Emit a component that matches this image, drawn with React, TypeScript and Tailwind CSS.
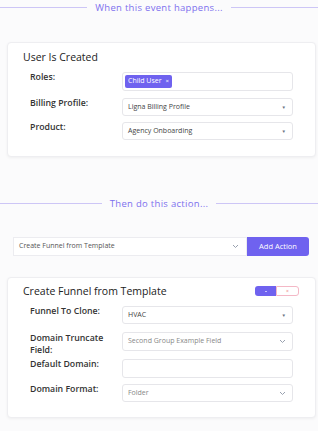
import React from 'react';

const font = { fontFamily: '"Open Sans", "Liberation Sans", sans-serif' };

function Divider({ text }: { text: string }) {
  return (
    <div className="flex items-center gap-[8px] h-[13px]">
      <div className="flex-1 h-px bg-[#cdc6f6]" />
      <span className="text-[9.5px] leading-[13px] tracking-[0.3px] text-[#7d70ee]">{text}</span>
      <div className="flex-1 h-px bg-[#cdc6f6]" />
    </div>
  );
}

function Caret() {
  return <span className="text-[4.5px] text-gray-500">▼</span>;
}

function Chevron() {
  return (
    <svg width="7" height="5" viewBox="0 0 7 5" className="text-gray-400">
      <path d="M1 1l2.5 2.5L6 1" fill="none" stroke="currentColor" strokeWidth="1" />
    </svg>
  );
}

function Field({ label, children, tall }: { label: React.ReactNode; children: React.ReactNode; tall?: boolean }) {
  return (
    <div className="flex items-start">
      <div className={`w-[99px] pl-[7px] text-[8.75px] font-semibold text-[#333] ${tall ? 'leading-[12px] -mb-[5px]' : 'leading-[11px]'}`}>
        {label}
      </div>
      <div className="flex-1">{children}</div>
    </div>
  );
}

function Select({ value, chevron, h = 'h-[18px]', muted }: { value: string; chevron?: boolean; h?: string; muted?: boolean }) {
  return (
    <div className={`${h} flex items-center justify-between border border-[#e6e6ea] rounded-[3px] bg-white pl-[5px] pr-[6px]`}>
      <span className={`text-[7px] ${muted ? 'text-[#888]' : 'text-[#444]'}`}>{value}</span>
      {chevron ? <Chevron /> : <Caret />}
    </div>
  );
}

export default function App() {
  return (
    <div className="w-[318px] h-[431px] bg-[#fbfbfc] overflow-hidden" style={font}>
      <div className="pt-[1px]">
        <Divider text="When this event happens..." />
      </div>

      <div className="mt-[28px] ml-[7px] mr-[2px] bg-white border border-[#eeeef1] rounded-[4px] shadow-[0_1px_3px_rgba(0,0,0,0.05)] pl-[15px] pr-[22px] pt-[7px] pb-[16px]">
        <h2 className="text-[10.5px] font-medium text-[#222] leading-[14px]">User Is Created</h2>
        <div className="mt-[8px] flex flex-col">
          <Field label="Roles:">
            <div className="h-[19px] flex items-center border border-[#e6e6ea] rounded-[3px] bg-white pl-[2px]">
              <span className="h-[13px] flex items-center gap-[4px] px-[3px] rounded-[2px] bg-[#6f62ef] text-white text-[7px]">
                Child User <span className="text-[6px]">×</span>
              </span>
            </div>
          </Field>
          <div className="mt-[7px]">
            <Field label="Billing Profile:">
              <Select value="Ligna Billing Profile" />
            </Field>
          </div>
          <div className="mt-[6px]">
            <Field label="Product:">
              <Select value="Agency Onboarding" />
            </Field>
          </div>
        </div>
      </div>

      <div className="mt-[40px]">
        <Divider text="Then do this action..." />
      </div>

      <div className="mt-[27px] ml-[13px] mr-[9px] flex">
        <div className="flex-1 h-[19px] flex items-center justify-between border border-[#ececf0] bg-white pl-[5px] pr-[7px]">
          <span className="text-[7px] text-[#555]">Create Funnel from Template</span>
          <Chevron />
        </div>
        <button className="w-[62px] h-[19px] rounded-r-[3px] bg-[#6f62ef] text-white text-[7.5px]">Add Action</button>
      </div>

      <div className="mt-[21px] ml-[7px] mr-[2px] bg-white border border-[#eeeef1] rounded-[4px] shadow-[0_1px_3px_rgba(0,0,0,0.05)] pl-[15px] pr-[22px] pt-[6px] pb-[15px]">
        <div className="flex items-center justify-between">
          <h2 className="text-[10.5px] font-medium text-[#222] leading-[14px]">Create Funnel from Template</h2>
          <div className="flex mr-[-6px]">
            <div className="w-[21px] h-[10px] rounded-l-[3px] bg-[#6f62ef] flex items-center justify-center">
              <span className="w-[2px] h-px bg-white/60" />
            </div>
            <div className="w-[23px] h-[10px] rounded-r-[3px] border border-[#f4b8c6] bg-white flex items-center justify-center">
              <span className="text-[5px] text-[#e77] leading-none">×</span>
            </div>
          </div>
        </div>
        <div className="mt-[8px] flex flex-col">
          <Field label="Funnel To Clone:">
            <Select value="HVAC" />
          </Field>
          <div className="mt-[8px]">
            <Field label={<>Domain Truncate<br />Field:</>} tall>
              <Select value="Second Group Example Field" chevron h="h-[19px]" muted />
            </Field>
          </div>
          <div className="mt-[8px]">
            <Field label="Default Domain:">
              <div className="h-[19px] border border-[#e6e6ea] rounded-[3px] bg-white" />
            </Field>
          </div>
          <div className="mt-[6px]">
            <Field label="Domain Format:">
              <Select value="Folder" chevron muted />
            </Field>
          </div>
        </div>
      </div>
    </div>
  );
}
